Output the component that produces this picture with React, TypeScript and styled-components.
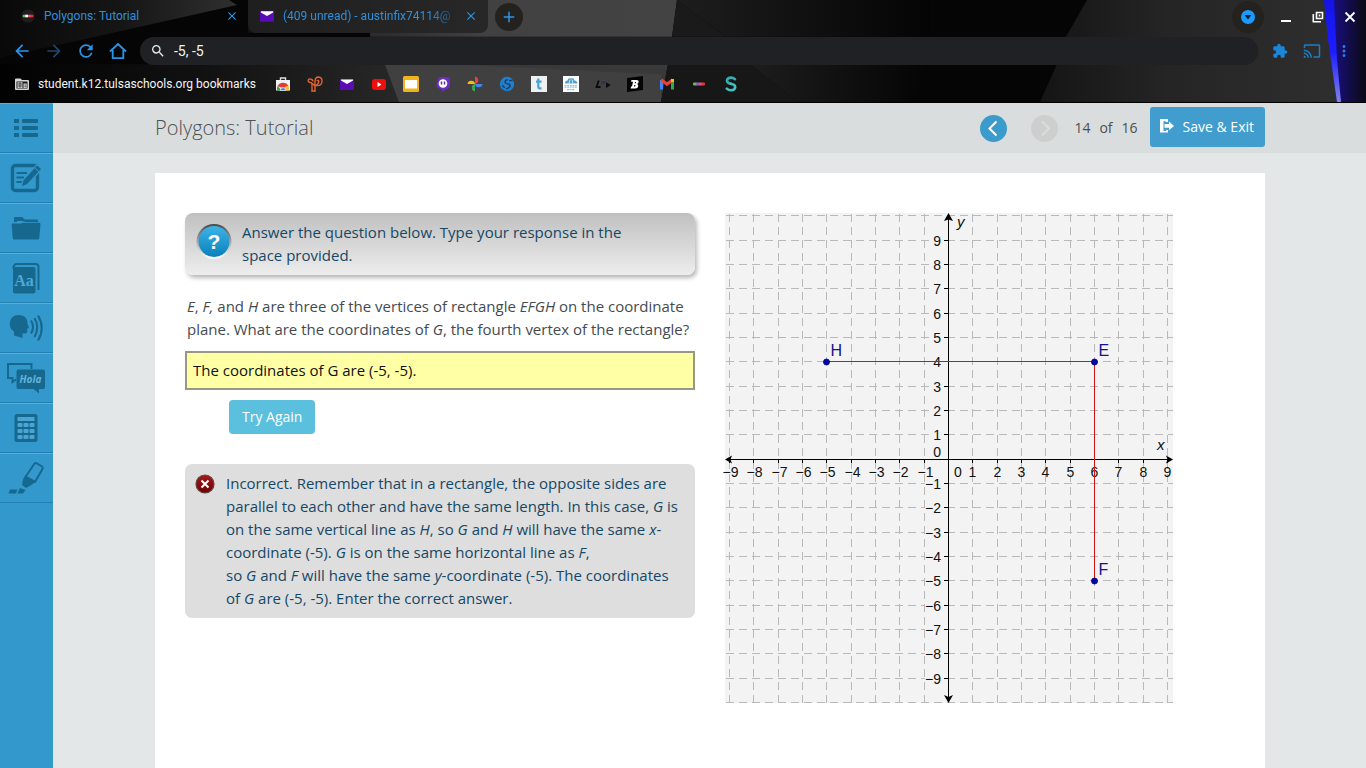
import React from "react";
import styled, { createGlobalStyle } from "styled-components";
import {
  MdArrowBack,
  MdArrowForward,
  MdRefresh,
  MdSearch,
  MdExtension,
  MdCast,
  MdMoreVert,
  MdClose,
  MdAdd,
} from "react-icons/md";

const GlobalStyle = createGlobalStyle`
  * { box-sizing: border-box; }
  html, body { margin: 0; padding: 0; }
  body { font-family: "Open Sans", sans-serif; background: #e4e7e8; }
  button, input { font: inherit; }
  button { padding: 0; border: 0; background: none; color: inherit; cursor: pointer; }
  svg { display: block; flex: none; }
`;

const Screen = styled.div`
  display: flex;
  flex-direction: column;
  min-height: 100vh;
`;

/* ---------- browser frame ---------- */

const Frame = styled.header`
  position: relative;
  isolation: isolate;
  height: 103px;
  overflow: hidden;
  background: #060506;
  border-bottom: 1px solid #000;
  font-family: Roboto, sans-serif;
`;

const Backdrop = styled.svg`
  position: absolute;
  inset: 0;
  z-index: -1;
  width: 100%;
  height: 100%;
`;

const TabStrip = styled.div`
  display: flex;
  align-items: center;
  height: 33px;
`;

const Tab = styled.div<{ $active?: boolean }>`
  display: flex;
  align-items: center;
  gap: 9px;
  width: ${(p) => (p.$active ? 248 : 240)}px;
  height: 33px;
  padding: 0 10px 2px ${(p) => (p.$active ? 21 : 12)}px;
  background: ${(p) => (p.$active ? "transparent" : "rgba(34, 34, 35, 0.82)")};
  border-radius: 0 0 8px 8px;
  color: #2f8fdb;
`;

const TabTitle = styled.button<{ $fade?: boolean }>`
  flex: 1;
  min-width: 0;
  height: 20px;
  overflow: hidden;
  white-space: nowrap;
  text-align: left;
  font-size: 12px;
  line-height: 20px;
  ${(p) => p.$fade && "mask-image: linear-gradient(90deg, #000 85%, rgba(0,0,0,0.3));"}
`;

const IconButton = styled.button<{ $size?: number; $tone?: string }>`
  display: flex;
  align-items: center;
  justify-content: center;
  flex: none;
  width: ${(p) => p.$size ?? 20}px;
  height: ${(p) => p.$size ?? 20}px;
  color: ${(p) => p.$tone ?? "#2a94ea"};
`;

const RoundButton = styled(IconButton)`
  border-radius: 50%;
  background: #24221f;
`;

const NewTabButton = styled(RoundButton)`
  margin-left: 7px;
`;

const WindowControls = styled.div`
  display: flex;
  align-items: center;
  gap: 12px;
  margin-left: auto;
  padding-right: 6px;
`;

const Toolbar = styled.div`
  display: flex;
  align-items: center;
  gap: 12px;
  height: 36px;
  padding: 0 12px;
`;

const Omnibox = styled.label`
  display: flex;
  align-items: center;
  gap: 8px;
  flex: 1;
  height: 28px;
  padding: 0 10px;
  border-radius: 14px;
  background: #202124;
  color: #e8eaed;
`;

const OmniInput = styled.input`
  flex: 1;
  min-width: 0;
  padding: 0;
  border: 0;
  outline: 0;
  background: transparent;
  color: #f1f3f4;
  font-size: 14px;
`;

const Bookmarks = styled.nav`
  display: flex;
  align-items: center;
  gap: 16px;
  height: 30px;
  padding: 0 14px;
`;

const FolderLink = styled.a`
  display: flex;
  align-items: center;
  gap: 8px;
  margin-right: 3px;
  color: #f4f4f4;
  font-size: 12px;
  line-height: 16px;
  text-decoration: none;
  white-space: nowrap;
`;

const Bookmark = styled.a`
  display: block;
  width: 16px;
  height: 16px;
`;

/* ---------- lesson page ---------- */

const Workspace = styled.div`
  display: flex;
  flex: 1;
`;

const Rail = styled.nav`
  flex: none;
  width: 53px;
  background: #3399cd;
`;

const RailButton = styled.button`
  display: flex;
  align-items: center;
  justify-content: center;
  width: 100%;
  height: 50px;
  padding: 0 2px 1px 0;
  border-top: 1px solid #55aede;
  border-bottom: 1px solid #2480b0;
`;

const Main = styled.main`
  display: flex;
  flex-direction: column;
  flex: 1;
  min-width: 0;
`;

const TitleBar = styled.div`
  display: flex;
  align-items: center;
  justify-content: space-between;
  height: 50px;
  padding: 0 101px 0 102px;
  background: #d9dddd;
`;

const Title = styled.h1`
  margin: 0;
  color: #4c5254;
  font-size: 20px;
  font-weight: 300;
  line-height: 28px;
`;

const Pager = styled.div`
  display: flex;
  align-items: center;
  height: 50px;
  padding-bottom: 2px;
`;

const PageButton = styled.button`
  display: block;
  width: 27px;
  height: 27px;
  margin: 2px 24px 0 0;

  & + & {
    margin-right: 16px;
  }
`;

const PageCount = styled.span`
  display: flex;
  gap: 9px;
  margin-right: 12px;
  padding-top: 2px;
  color: #4b4f51;
  font-size: 14px;
  line-height: 20px;
`;

const SaveButton = styled.button`
  display: flex;
  align-items: center;
  gap: 9px;
  height: 40px;
  padding: 0 11px 2px 10px;
  border-radius: 3px;
  background: #409dce;
  color: #fff;
  font-size: 14px;
`;

const Sheet = styled.section`
  display: grid;
  grid-template-columns: 1fr 1fr;
  align-items: start;
  gap: 30px;
  flex: 1;
  margin: 20px 101px 0 102px;
  padding: 40px 30px;
  background: #fff;
`;

const Column = styled.div`
  min-width: 0;
  color: #444b50;
  font-size: 15px;
  line-height: 23px;
`;

const Prompt = styled.div`
  display: flex;
  gap: 8px;
  padding: 8px 48px 8px 8px;
  border-radius: 8px;
  background: linear-gradient(#c0c0c0, #ededed);
  box-shadow: 2px 3px 4px rgba(0, 0, 0, 0.28);
  color: #154866;
`;

const Question = styled.label`
  display: block;
  padding: 20px 0 10px 2px;
`;

const Answer = styled.input`
  display: block;
  width: 100%;
  height: 39px;
  padding: 0 6px 2px;
  border: 2px solid #989887;
  outline: 0;
  background: #ffffa6;
  color: #111;
  font-size: 15px;
`;

const TryAgain = styled.button`
  display: block;
  height: 34px;
  margin: 10px 0 30px 44px;
  padding: 0 13px 2px;
  border-radius: 4px;
  background: #5bc0de;
  color: #fff;
  font-size: 14px;
`;

const Feedback = styled.div`
  display: flex;
  gap: 11px;
  padding: 8px 10px;
  border-radius: 7px;
  background: #dedede;
  color: #154866;

  svg {
    margin-top: 2px;
  }
`;

const Paragraph = styled.p`
  margin: 0;
`;

const PlotArea = styled.svg`
  overflow: visible;
`;

/* ---------- drawings ---------- */

const FrameArt = () => (
  <Backdrop viewBox="0 0 1366 103" preserveAspectRatio="none" aria-hidden="true">
    <defs>
      <linearGradient id="wedge" x1="0" x2="1">
        <stop offset="0" stopColor="#0a090a" />
        <stop offset="0.5" stopColor="#161516" />
        <stop offset="1" stopColor="#2f2f2f" />
      </linearGradient>
      <linearGradient id="mid" x1="0" x2="1">
        <stop offset="0" stopColor="#111" />
        <stop offset="0.3" stopColor="#2c2c2c" />
        <stop offset="0.55" stopColor="#414141" />
        <stop offset="1" stopColor="#434343" />
      </linearGradient>
      <linearGradient id="low" x1="0" x2="1">
        <stop offset="0" stopColor="#020202" />
        <stop offset="0.5" stopColor="#111" />
        <stop offset="1" stopColor="#282828" />
      </linearGradient>
      <linearGradient id="fade" x1="0" x2="1">
        <stop offset="0" stopColor="#1d1d1d" />
        <stop offset="1" stopColor="#040404" />
      </linearGradient>
      <linearGradient id="steel" x1="0" x2="1">
        <stop offset="0" stopColor="#151515" />
        <stop offset="0.4" stopColor="#252525" />
        <stop offset="1" stopColor="#303030" />
      </linearGradient>
      <linearGradient id="glow" x1="0" x2="1">
        <stop offset="0" stopColor="#1c10a0" />
        <stop offset="1" stopColor="#0b0a12" />
      </linearGradient>
      <linearGradient id="beam" x1="0" x2="0" y1="0" y2="1">
        <stop offset="0" stopColor="#1414e6" />
        <stop offset="0.5" stopColor="#1c1cff" />
        <stop offset="1" stopColor="#8080f0" />
      </linearGradient>
    </defs>
    <path d="M0 0H229L237 5L83 40L0 58Z" fill="url(#wedge)" />
    <path d="M248 0H677L672 37H370V33H248Z" fill="url(#mid)" />
    <path d="M0 65H390L402 103H0Z" fill="url(#low)" />
    <path d="M385 65H668L661 103H399Z" fill="#393939" />
    <path d="M399 103L385 65H450L661 75V103Z" fill="#404040" />
    <path d="M677 0L726 37H672Z" fill="#1a1a1a" />
    <path d="M677 0H930V37H726Z" fill="url(#fade)" />
    <path d="M668 65H750L798 103H661Z" fill="#171717" />
    <path d="M750 65H930L910 103H798Z" fill="url(#fade)" />
    <path d="M1087 0H1366V103H1040L1057 65L1066 37Z" fill="url(#steel)" />
    <path d="M1324 0H1366V103H1341Z" fill="url(#glow)" />
    <path d="M1324 0H1334L1337 60L1341 103H1337L1328 40Z" fill="url(#beam)" />
  </Backdrop>
);

const icon16 = { width: 16, height: 16, viewBox: "0 0 16 16", "aria-hidden": true } as const;

const DotsIcon = ({ disc }: { disc?: boolean }) => (
  <svg {...icon16} width={disc ? 14 : 16} height={disc ? 14 : 16}>
    {disc && <circle cx="8" cy="8" r="7.5" fill="#201d1e" />}
    <rect x="2" y="6.5" width="4" height="3" rx="1" fill="#5fbf5a" />
    <rect x="5" y="6.5" width="3" height="3" fill={disc ? "#fff" : "#9b59b6"} />
    <rect x="8" y="6.5" width="3" height="3" fill="#e84a8a" />
    <rect x="10.5" y="6.5" width="3.5" height="3" rx="1" fill="#e53935" />
  </svg>
);

const MailIcon = () => (
  <svg {...icon16} width={14} height={14}>
    <rect y="2" width="16" height="12.5" rx="1" fill="#5a0db5" />
    <path d="M1 2.5H15V4L8 8L1 4Z" fill="#fff" />
  </svg>
);

const bookmarkIcons: { name: string; art: React.ReactNode }[] = [
  {
    name: "Web Store",
    art: (
      <svg {...icon16}>
        <path d="M5.5 4V2H10.5V4" fill="none" stroke="#ddd" strokeWidth="1.4" />
        <path d="M1 4H15V14.5H1Z" fill="#f1f1f1" />
        <path d="M2.5 10A6.2 6.2 0 0 1 13.5 10L10 12L6 11.5Z" fill="#e53935" />
        <path d="M2 14.5A6 6 0 0 1 2.8 9.8L6.5 14.5Z" fill="#43a047" />
        <path d="M13.2 9.8A6 6 0 0 1 14 14.5H9L9.5 11Z" fill="#fbc02d" />
        <path d="M5.2 14.5A2.8 2.8 0 0 1 10.8 14.5Z" fill="#3b82e0" stroke="#fff" strokeWidth="0.6" />
      </svg>
    ),
  },
  {
    name: "Pear Deck",
    art: (
      <svg {...icon16} fill="none" stroke="#e2612f" strokeWidth="1.4" strokeLinecap="round">
        <path d="M5 15V8.5Q5 6.500 3.5 6.5Q1.200 6.500 1.200 4.500Q1.400 2.600 4 3.200Q5.500 3.600 6 5" />
        <path d="M8 15V5.500Q8 1 11.500 1Q15 1.300 15 5Q14.800 9.600 10.500 9.600Q6.500 9.500 5 7.500" />
        <path d="M8 10Q11.800 8 11.800 5.500Q11.500 3.800 10.200 4.600" />
        <path d="M5 15H8" />
      </svg>
    ),
  },
  { name: "Mail", art: <svg {...icon16}><rect x="1" y="3" width="14" height="11" fill="#5a0db5" /><path d="M2 3.5H14V4.500L8 8L2 4.500Z" fill="#fff" /></svg> },
  { name: "Video", art: <svg {...icon16}><rect x="1" y="3" width="14" height="11" rx="3" fill="#f00d0d" /><path d="M6.5 6L10.5 8.5L6.5 11Z" fill="#fff" /></svg> },
  { name: "Slides", art: <svg {...icon16}><rect width="16" height="16" rx="1.5" fill="#f0b51d" /><rect x="2" y="4" width="12" height="8.5" fill="#fff" /></svg> },
  {
    name: "Pin",
    art: (
      <svg {...icon16}>
        <path d="M4 1H13Q15 1 15 3V10Q15 12 13 12.5L10 13.5L8 16L6 13L3 12Q1 11 1.5 8Z" fill="#6a2fc0" />
        <circle cx="8" cy="7.5" r="4.3" fill="#fff" />
        <path d="M6.5 5.5V8.5M9.5 5.5V8.5" stroke="#5a25a8" strokeWidth="1.5" />
      </svg>
    ),
  },
  {
    name: "Photos",
    art: (
      <svg {...icon16}>
        <path d="M8 0.5A3.8 3.8 0 0 1 8 8Z" fill="#ea4335" />
        <path d="M0.5 8A3.8 3.8 0 0 1 8 8Z" fill="#fbbc04" />
        <path d="M8 8A3.8 3.8 0 0 0 8 15.5Z" fill="#34a853" />
        <path d="M8 8A3.8 3.8 0 0 0 15.5 8Z" fill="#4285f4" />
      </svg>
    ),
  },
  {
    name: "Globe",
    art: (
      <svg {...icon16}>
        <circle cx="8" cy="8" r="7.2" fill="#1f7fd0" />
        <path d="M8.5 3.5Q5 5 6.5 7Q8 8 9.5 8Q12 9 10.5 11Q9.5 12.5 7 13M10 4.5H13.5M3 9.5Q4.5 9.5 5.5 12" fill="none" stroke="#24405c" strokeWidth="1.5" />
      </svg>
    ),
  },
  {
    name: "Typing",
    art: (
      <svg {...icon16}>
        <rect width="16" height="16" fill="#eef0f2" />
        <path d="M7.3 2.5V10.6Q7.3 12.4 9 12.4H10.5M5 5.6H10.6" fill="none" stroke="#4aa3d8" strokeWidth="2.2" />
      </svg>
    ),
  },
  {
    name: "Schools",
    art: (
      <svg {...icon16}>
        <rect width="16" height="16" fill="#fff" />
        <path d="M2 7.5Q2 4.5 4.5 4.5Q5 1.5 8 2.5Q11 1.5 11.5 4.5Q14 4.5 14.5 7.5Z" fill="#4ba3cf" />
        <path d="M6 7.5L7 3.5M10 7.5L9 3.5" stroke="#fff" strokeWidth="0.7" />
        <path d="M1.5 9.5H14.5M1.5 11.2H14.5M4 13.7H12" stroke="#8cc4de" strokeWidth="1.2" strokeDasharray="2 0.6" />
      </svg>
    ),
  },
  {
    name: "Play",
    art: (
      <svg {...icon16}>
        <path d="M3.8 4.5L1.5 11H5.5" fill="none" stroke="#0b0b0b" strokeWidth="1.8" />
        <path d="M6.5 5H10.5L9.5 8H6Z" fill="#2b3350" />
        <path d="M11 6.3L15.8 9L11 12Z" fill="#0b0b0b" />
      </svg>
    ),
  },
  {
    name: "B",
    art: (
      <svg {...icon16}>
        <path d="M0 2L16 0V14L0 16Z" fill="#050505" />
        <path d="M4.4 4H9.4Q12 4 11.6 6.1Q11.4 7.5 10 8Q11.6 8.4 11.2 10.2Q10.8 12.4 8.2 12.4H3.6L4 10.6H5L6 5.8H4.1ZM8 6L7.7 7.3H8.7Q9.3 6.6 8.8 6ZM7.3 9L7 10.6H8Q8.9 9.7 8.2 9Z" fill="#fff" fillRule="evenodd" />
      </svg>
    ),
  },
  {
    name: "Gmail",
    art: (
      <svg {...icon16} fill="none" strokeWidth="3">
        <path d="M2.5 13.5V4" stroke="#4285f4" />
        <path d="M13.5 13.5V4" stroke="#34a853" />
        <path d="M2.2 3.8L8 8.3L13.8 3.8" stroke="#ea4335" />
        <path d="M13.5 3V6" stroke="#fbbc04" />
      </svg>
    ),
  },
  { name: "Edmentum", art: <DotsIcon /> },
  {
    name: "Studies",
    art: (
      <svg {...icon16} fill="none" strokeWidth="2.6" strokeLinecap="round">
        <path d="M12 3.2Q10 1.4 7.6 1.6Q4 2 4 4.8Q4 7 7.8 7.8" stroke="#35aeb0" />
        <path d="M7.8 7.8Q12.2 8.6 12.2 11Q12 14.2 8.2 14.3Q5.6 14.4 3.8 12.6" stroke="#46c0c0" />
      </svg>
    ),
  },
];

const ink = "#17688f";
const rail = "#3399cd";

const railIcons: { name: string; art: React.ReactNode }[] = [
  {
    name: "Contents",
    art: (
      <svg width="26" height="20" viewBox="0 0 26 20" fill={ink}>
        {[1, 8, 15].map((y) => (
          <g key={y}>
            <rect x="1" y={y} width="5" height="4" />
            <rect x="9" y={y} width="16" height="4" rx="1" />
          </g>
        ))}
      </svg>
    ),
  },
  {
    name: "Notes",
    art: (
      <svg width="32" height="30" viewBox="0 0 32 30">
        <rect x="2.5" y="2.5" width="25" height="25" rx="3" fill="none" stroke={ink} strokeWidth="3.4" />
        <path d="M6.5 10H17M6.5 14.5H14M6.5 19H12" stroke={ink} strokeWidth="2" />
        <path d="M27 1.5L32 6L17.5 21.5L11 24L13 17Z" fill={ink} stroke={rail} strokeWidth="1.2" />
        <path d="M24.5 4.5L29 8.8" stroke={rail} strokeWidth="1" />
      </svg>
    ),
  },
  {
    name: "Files",
    art: (
      <svg width="30" height="24" viewBox="0 0 30 24" fill={ink}>
        <path d="M3 6V2Q3 1 4 1H11L14 3.5H26Q27 3.5 27 5V6H15L11 5H6V6Z" />
        <path d="M1.5 7.5H10L12 6.8H28.5Q29.6 7 29.5 8L28.3 22Q28.2 23.5 27 23.5H3Q1.8 23.5 1.7 22L0.7 8.5Q0.6 7.5 1.5 7.5Z" />
      </svg>
    ),
  },
  {
    name: "Dictionary",
    art: (
      <svg width="30" height="32" viewBox="0 0 30 32">
        <path d="M2.5 7V5Q3 2 6 2H24.5Q27.5 2 27.5 5V28" fill="none" stroke={ink} strokeWidth="2" />
        <rect x="2" y="5" width="22.5" height="26.5" rx="2" fill={ink} />
        <text x="13" y="24" textAnchor="middle" fontFamily="Liberation Serif, serif" fontWeight="700" fontSize="16" fill="#4fa9d6">Aa</text>
      </svg>
    ),
  },
  {
    name: "Read aloud",
    art: (
      <svg width="34" height="28" viewBox="0 0 34 28">
        <path d="M9.5 1Q17 1 18.3 7L18.5 10L20 13.5L18.3 14.5V18Q18 20 13.5 19.5V24L5 21.5V17.5Q0 14 .8 8.5Q2 1 9.5 1Z" fill={ink} />
        <g fill="none" stroke={ink} strokeWidth="2.1">
          <path d="M22 6.5Q26 13 22 19.5" />
          <path d="M25.5 4Q31 13 25.5 23" />
          <path d="M29 1.5Q36.5 14 29 26.5" />
        </g>
      </svg>
    ),
  },
  {
    name: "Translate",
    art: (
      <svg width="38" height="32" viewBox="0 0 38 32">
        <path d="M9 17.5L5.5 20V16H1V2H24.5V7" fill="none" stroke={ink} strokeWidth="2" />
        <path d="M11 7.5H36Q38 7.5 38 9.5V25Q38 27 36 27H32V31.5L26.5 27H11Q9.5 27 9.5 25V9.5Q9.5 7.5 11 7.5Z" fill={ink} />
        <text x="23.5" y="21" textAnchor="middle" fontFamily="Open Sans, sans-serif" fontStyle="italic" fontWeight="700" fontSize="10" fill="#62b4dd">Hola</text>
      </svg>
    ),
  },
  {
    name: "Calculator",
    art: (
      <svg width="24" height="28" viewBox="0 0 24 28">
        <rect x="0.5" width="23" height="28" rx="2.5" fill={ink} />
        <g fill="#4aa5d4">
          <rect x="3.5" y="3" width="17" height="4" />
          {[9, 15, 21].map((y) =>
            [3.5, 9.5, 15.5].map((x) => <rect key={`${x}-${y}`} x={x} y={y} width="5" height="4" rx="1" />)
          )}
        </g>
      </svg>
    ),
  },
  {
    name: "Highlighter",
    art: (
      <svg width="36" height="32" viewBox="0 0 36 32">
        <path d="M26.5 1.5Q27.5 .8 28.5 1.2L34 4.5Q35 5.5 34.5 7L27 20L17.5 15Z" fill="none" stroke={ink} strokeWidth="2" strokeLinejoin="round" />
        <path d="M17.5 13.5L28 19.5L23.5 23L18 26L14 23L15 17Z" fill={ink} />
        <path d="M2 27.5H9.5L8 31.5H.5ZM12 26L17.5 28L15 31.5H9.5Z" fill={ink} />
      </svg>
    ),
  },
];

const UNIT = 73 / 3;
const ORIGIN = { x: 223.5, y: 246.5 };
/* Grid lines sit on half pixels so that one-pixel strokes stay crisp. */
const px = (n: number) => Math.round(ORIGIN.x + n * UNIT - 0.5) + 0.5;
const py = (n: number) => Math.floor(ORIGIN.y - n * UNIT - 0.5 + 0.01) + 0.5;
const ticks = Array.from({ length: 19 }, (_, i) => i - 9);
const rows = Array.from({ length: 21 }, (_, i) => i - 10);
const label = (n: number) => (n < 0 ? `−${-n}` : `${n}`);
const points = [
  { name: "H", x: -5, y: 4 },
  { name: "E", x: 6, y: 4 },
  { name: "F", x: 6, y: -5 },
];

const Plot = () => (
  <PlotArea width="448" height="490" viewBox="0 0 448 490" role="img" aria-label="Coordinate plane with points H, E and F" fontFamily="Liberation Sans, Arial, sans-serif">
    <rect width="448" height="490" fill="#f3f3f3" />
    <g stroke="#b9b9b9" strokeDasharray="8 5">
      {ticks.map((n) => <path key={n} d={`M${px(n)} 1V490`} />)}
      {rows.map((n) => <path key={n} d={`M1 ${Math.min(py(n), 489.5)}H448`} />)}
    </g>
    <g fill="#f3f3f3">
      {ticks.filter((n) => n !== 0).map((n) => (
        <rect key={n} x={n < 0 ? 200 : 207} y={py(n) - 6} width={n < 0 ? 18 : 11} height="12" />
      ))}
    </g>
    <g stroke="#000">
      <path d="M223.5 5V486M3 246.5H444" />
      {ticks.map((n) => <path key={n} d={`M${px(n)} 247V250M219 ${py(n)}H223`} />)}
    </g>
    <path d="M223.5 0L228 8L223.5 6.5L219 8ZM223.5 490L228 482L223.5 484L219 482ZM0 246.5L7 242.5L5.5 246.5L7 250.5ZM448 246.5L441 242.5L442.5 246.5L441 250.5Z" fill="#000" />
    <g fill="#111" fontSize="14">
      {ticks.filter((n) => n !== 0).map((n) => (
        <React.Fragment key={n}>
          <text x={px(n) + (n < 0 ? 1 : 0)} y="264" textAnchor="middle">{label(n)}</text>
          <text x="216" y={py(n) + 5} textAnchor="end">{label(n)}</text>
        </React.Fragment>
      ))}
      <text x="229" y="264">0</text>
      <text x="216" y="244" textAnchor="end">0</text>
      <text x="232" y="14" fontStyle="italic" fontSize="15">y</text>
      <text x="432" y="237" fontStyle="italic" fontSize="15">x</text>
    </g>
    <g stroke="#d01414">
      <path d={`M${px(-5)} ${py(4)}H${px(6)}`} />
      <path d={`M${px(6)} ${py(4)}V${py(-5)}`} />
    </g>
    {points.map((p) => (
      <g key={p.name}>
        <circle cx={px(p.x)} cy={py(p.y) + 0.5} r="3" fill="#0000b4" stroke="#000060" strokeWidth="0.8" />
        <text x={px(p.x) + 4} y={py(p.y) - 6} fontSize="16" fill="#14148c">{p.name}</text>
      </g>
    ))}
  </PlotArea>
);

const HelpBadge = () => (
  <svg width="41" height="46" viewBox="0 0 41 46" aria-hidden="true">
    <defs>
      <linearGradient id="ring" x1="0" x2="0" y1="0" y2="1">
        <stop offset="0" stopColor="#484848" />
        <stop offset="0.5" stopColor="#a8a8a8" />
        <stop offset="1" stopColor="#fff" />
      </linearGradient>
      <linearGradient id="orb" x1="0" x2="0" y1="0" y2="1">
        <stop offset="0" stopColor="#3db4e6" />
        <stop offset="1" stopColor="#0a80bb" />
      </linearGradient>
    </defs>
    <circle cx="21" cy="20.5" r="17.5" fill="url(#ring)" />
    <circle cx="21" cy="20.5" r="15.5" fill="url(#orb)" />
    <text x="21" y="28" textAnchor="middle" fontFamily="Liberation Sans, Arial, sans-serif" fontWeight="700" fontSize="21" fill="#fff">?</text>
  </svg>
);

const WrongBadge = () => (
  <svg width="20" height="20" viewBox="0 0 20 20" aria-hidden="true">
    <defs>
      <linearGradient id="red" x1="0" x2="0" y1="0" y2="1">
        <stop offset="0" stopColor="#a81818" />
        <stop offset="1" stopColor="#6c0000" />
      </linearGradient>
    </defs>
    <circle cx="10" cy="10" r="9" fill="url(#red)" stroke="#5c4444" strokeWidth="1.2" />
    <path d="M6.5 6.5L13.5 13.5M13.5 6.5L6.5 13.5" stroke="#fff" strokeWidth="2" />
  </svg>
);

export default function App() {
  return (
    <Screen>
      <GlobalStyle />
      <Frame>
        <FrameArt />
        <TabStrip>
          <Tab $active>
            <DotsIcon disc />
            <TabTitle>Polygons: Tutorial</TabTitle>
            <IconButton $size={12} aria-label="Close tab"><MdClose size={14} /></IconButton>
          </Tab>
          <Tab>
            <MailIcon />
            <TabTitle $fade>(409 unread) - austinfix74114@</TabTitle>
            <IconButton $size={14} aria-label="Close tab"><MdClose size={14} /></IconButton>
          </Tab>
          <NewTabButton $size={28} aria-label="New tab"><MdAdd size={18} /></NewTabButton>
          <WindowControls>
            <RoundButton $size={32} aria-label="Search tabs">
              <svg {...icon16}><circle cx="8" cy="8" r="7" fill="#1a9bff" /><path d="M4.5 6H11.5L8 10.5Z" fill="#15202b" /></svg>
            </RoundButton>
            <IconButton $tone="#fff" aria-label="Minimize">
              <svg {...icon16}><path d="M3 12H13" stroke="currentColor" strokeWidth="2" /></svg>
            </IconButton>
            <IconButton $tone="#fff" aria-label="Restore">
              <svg {...icon16} fill="none" stroke="currentColor" strokeWidth="1.6"><path d="M6.5 3.5H12.5V9.5H6.5ZM3.3 5V12.7H11" /><path d="M9.5 5.5V7.5" /></svg>
            </IconButton>
            <IconButton $tone="#fff" aria-label="Close window">
              <svg {...icon16}><path d="M3.5 3.5L12.5 12.5M12.5 3.5L3.5 12.5" stroke="currentColor" strokeWidth="1.8" /></svg>
            </IconButton>
          </WindowControls>
        </TabStrip>
        <Toolbar>
          <IconButton aria-label="Back"><MdArrowBack size={20} /></IconButton>
          <IconButton $tone="#22466b" aria-label="Forward"><MdArrowForward size={20} /></IconButton>
          <IconButton aria-label="Reload"><MdRefresh size={20} /></IconButton>
          <IconButton aria-label="Home">
            <svg width="18" height="18" viewBox="0 0 18 18" fill="none" stroke="currentColor" strokeWidth="1.8">
              <path d="M1 9.5L9 2L17 9.5M3.7 8V16.2H14.3V8" />
            </svg>
          </IconButton>
          <Omnibox>
            <MdSearch size={16} />
            <OmniInput aria-label="Address and search bar" defaultValue="-5, -5" />
          </Omnibox>
          <IconButton $tone="#1b86d6" aria-label="Extensions"><MdExtension size={16} /></IconButton>
          <IconButton $tone="#1b7fc4" aria-label="Cast"><MdCast size={18} /></IconButton>
          <IconButton $tone="#2a78e8" aria-label="Menu"><MdMoreVert size={18} /></IconButton>
        </Toolbar>
        <Bookmarks aria-label="Bookmarks">
          <FolderLink href="#bookmarks">
            <svg {...icon16}>
              <path d="M2 2.5H6.5L8 4H14Q15 4 15 5V13Q15 14 14 14H2Q1 14 1 13V3.5Q1 2.5 2 2.5Z" fill="#d6d6d6" />
              <path d="M2.5 5.5H13.5V12.5H2.5Z" fill="#1a1a1a" />
              <path d="M3.5 6.2H8.5V12H3.5ZM9.5 7.5H12.7V12H9.5Z" fill="#d6d6d6" />
              <path d="M4 8H8.5M4 10H8.5M6 6V12M10.5 9H12M10.5 10.7H12" stroke="#1a1a1a" strokeWidth="0.7" />
            </svg>
            student.k12.tulsaschools.org bookmarks
          </FolderLink>
          {bookmarkIcons.map((b) => (
            <Bookmark key={b.name} href="#bookmark" aria-label={b.name}>{b.art}</Bookmark>
          ))}
        </Bookmarks>
      </Frame>

      <Workspace>
        <Rail aria-label="Lesson tools">
          {railIcons.map((r) => (
            <RailButton key={r.name} aria-label={r.name}>{r.art}</RailButton>
          ))}
        </Rail>
        <Main>
          <TitleBar>
            <Title>Polygons: Tutorial</Title>
            <Pager>
              <PageButton aria-label="Previous page">
                <svg width="27" height="27" viewBox="0 0 27 27">
                  <circle cx="13.5" cy="13.5" r="13.5" fill="#3a9bcc" />
                  <path d="M16.5 6.5L9.5 13.5L16.5 20.5" fill="none" stroke="#fff" strokeWidth="2" />
                </svg>
              </PageButton>
              <PageButton aria-label="Next page">
                <svg width="27" height="27" viewBox="0 0 27 27">
                  <circle cx="13.5" cy="13.5" r="13.5" fill="#cdcfcf" />
                  <path d="M11 6.5L18 13.5L11 20.5" fill="none" stroke="#dcdede" strokeWidth="2" />
                </svg>
              </PageButton>
              <PageCount><span>14</span><span>of</span><span>16</span></PageCount>
              <SaveButton>
                <svg width="14" height="16" viewBox="0 0 14 16" fill="#fff">
                  <path d="M0 1H8V4H6V3.5L3.5 3V13H6V12H8V14.5H0Z" />
                  <path d="M4.5 6H9V3.5L14 8L9 12.2V9.8H4.5Z" />
                </svg>
                Save &amp; Exit
              </SaveButton>
            </Pager>
          </TitleBar>
          <Sheet>
            <Column>
              <Prompt>
                <HelpBadge />
                <Paragraph>Answer the question below. Type your response in the space provided.</Paragraph>
              </Prompt>
              <Question htmlFor="answer">
                <i>E</i>, <i>F,</i> and <i>H</i> are three of the vertices of rectangle <i>EFGH</i> on the coordinate plane. What are the coordinates of <i>G</i>, the fourth vertex of the rectangle?
              </Question>
              <Answer id="answer" defaultValue="The coordinates of G are (-5, -5)." />
              <TryAgain>Try Again</TryAgain>
              <Feedback role="status">
                <WrongBadge />
                <Paragraph>
                  Incorrect. Remember that in a rectangle, the opposite sides are parallel to each other and have the same length. In this case, <i>G</i> is on the same vertical line as <i>H</i>, so <i>G</i> and <i>H</i> will have the same <i>x</i>-coordinate (-5). <i>G</i> is on the same horizontal line as <i>F</i>,<br />
                  so <i>G</i> and <i>F</i> will have the same <i>y</i>-coordinate (-5). The coordinates of <i>G</i> are (-5, -5). Enter the correct answer.
                </Paragraph>
              </Feedback>
            </Column>
            <Plot />
          </Sheet>
        </Main>
      </Workspace>
    </Screen>
  );
}
